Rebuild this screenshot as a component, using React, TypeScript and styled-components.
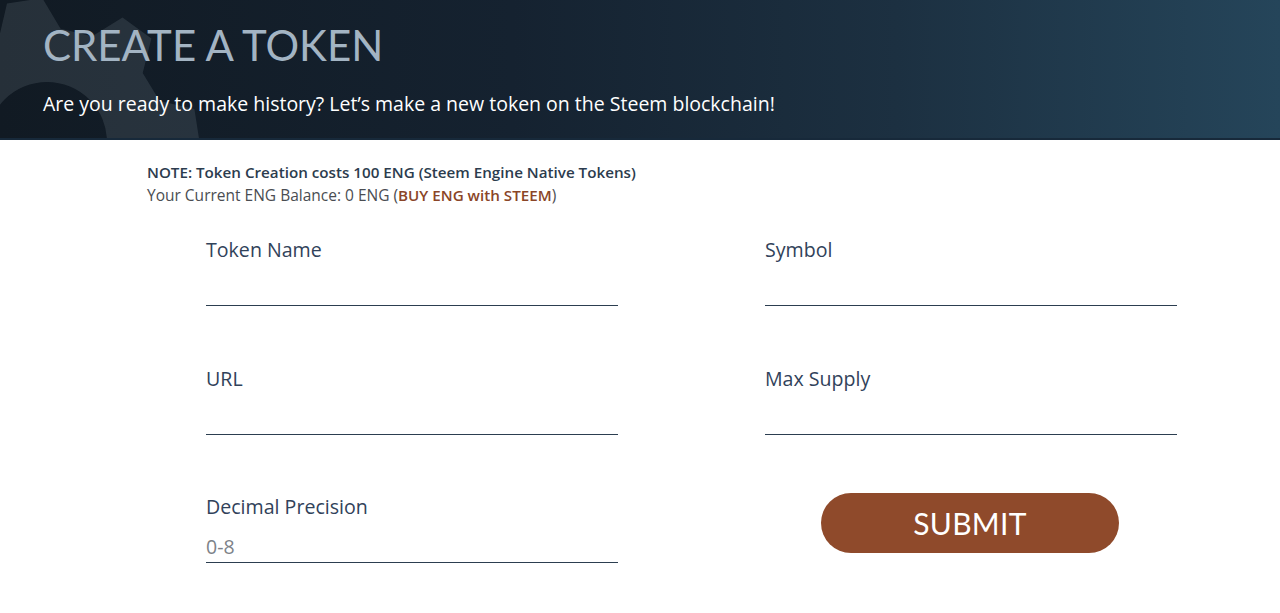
import styled, { createGlobalStyle } from "styled-components";

const GlobalStyle = createGlobalStyle`
  * {
    box-sizing: border-box;
  }
  body {
    margin: 0;
    background: #ffffff;
    font-family: "Open Sans", "Liberation Sans", sans-serif;
  }
`;

const Page = styled.div`
  width: 1280px;
  min-height: 613px;
  background: #ffffff;
`;

const Header = styled.header`
  position: relative;
  height: 140px;
  padding: 20px 43px 0;
  overflow: hidden;
  border-bottom: 2px solid #17293a;
  background: linear-gradient(
    90deg,
    #111a23 0%,
    #152230 40%,
    #1c3041 70%,
    #25455a 100%
  );
`;

const Gear = styled.svg`
  position: absolute;
  left: 0;
  top: 0;
  width: 260px;
  height: 140px;
`;

const Title = styled.h1`
  position: relative;
  margin: 0;
  font-family: Lato, "Open Sans", sans-serif;
  font-weight: 400;
  font-size: 42px;
  line-height: 50px;
  color: #a3b4c3;
`;

const Subtitle = styled.p`
  position: relative;
  margin: 21px 0 0;
  font-size: 19.5px;
  line-height: 26px;
  color: #ffffff;
`;

const Content = styled.main`
  padding: 21px 0 0 147px;
`;

const Note = styled.div`
  font-size: 15.5px;
  line-height: 23px;
  color: #4a4d52;
`;

const NoteStrong = styled.div`
  font-size: 15.2px;
  font-weight: 600;
  color: #2c3c4e;
`;

const BuyLink = styled.a`
  font-size: 15.2px;
  font-weight: 600;
  color: #8a4527;
  text-decoration: none;
`;

const Form = styled.form`
  display: grid;
  grid-template-columns: 412px 412px;
  column-gap: 147px;
  row-gap: 59.5px;
  margin: 30px 0 0 59px;
`;

const Field = styled.label`
  display: flex;
  flex-direction: column;
`;

const Label = styled.span`
  font-size: 19.6px;
  line-height: 26px;
  color: #31425a;
`;

const Input = styled.input`
  height: 43px;
  padding: 10px 0 0;
  border: none;
  border-bottom: 1px solid #2c3e50;
  outline: none;
  background: transparent;
  font-family: "Open Sans", "Liberation Sans", sans-serif;
  font-size: 19.5px;
  color: #333;
  &::placeholder {
    color: #7d8288;
  }
`;

const SubmitCell = styled.div`
  display: flex;
  align-items: flex-start;
  padding-left: 56px;
`;

const SubmitButton = styled.button`
  width: 298px;
  height: 60px;
  margin-top: -1px;
  border: none;
  border-radius: 30px;
  background: #8f4a2b;
  color: #ffffff;
  font-family: Lato, "Open Sans", sans-serif;
  font-size: 30px;
  letter-spacing: 0.3px;
  cursor: pointer;
`;

function gearPath(cx: number, cy: number, teeth: number, rIn: number, rOut: number) {
  const pts: string[] = [];
  const step = (Math.PI * 2) / teeth;
  for (let i = 0; i < teeth; i++) {
    const a = i * step - 1.2;
    const seq = [
      [a, rIn],
      [a + step * 0.18, rOut],
      [a + step * 0.48, rOut],
      [a + step * 0.66, rIn],
    ];
    seq.forEach(([ang, r]) => {
      pts.push(`${(cx + Math.cos(ang) * r).toFixed(1)},${(cy + Math.sin(ang) * r).toFixed(1)}`);
    });
  }
  return `M${pts.join("L")}Z`;
}

const fields = [
  { label: "Token Name", placeholder: "" },
  { label: "Symbol", placeholder: "" },
  { label: "URL", placeholder: "" },
  { label: "Max Supply", placeholder: "" },
  { label: "Decimal Precision", placeholder: "0-8" },
];

function App() {
  return (
    <Page>
      <GlobalStyle />
      <Header>
        <Gear viewBox="0 0 260 140">
          <path
            fill="rgba(200,210,220,0.12)"
            fillRule="evenodd"
            d={`${gearPath(48, 150, 8, 122, 152)} M107,142 A60,60 0 1,0 -13,142 A60,60 0 1,0 107,142 Z`}
          />
        </Gear>
        <Title>CREATE A TOKEN</Title>
        <Subtitle>
          Are you ready to make history? Let’s make a new token on the Steem
          blockchain!
        </Subtitle>
      </Header>
      <Content>
        <Note>
          <NoteStrong>
            NOTE: Token Creation costs 100 ENG (Steem Engine Native Tokens)
          </NoteStrong>
          Your Current ENG Balance: 0 ENG (<BuyLink href="#">BUY ENG with STEEM</BuyLink>)
        </Note>
        <Form onSubmit={(e) => e.preventDefault()}>
          {fields.map((f) => (
            <Field key={f.label}>
              <Label>{f.label}</Label>
              <Input placeholder={f.placeholder} />
            </Field>
          ))}
          <SubmitCell>
            <SubmitButton type="submit">SUBMIT</SubmitButton>
          </SubmitCell>
        </Form>
      </Content>
    </Page>
  );
}

export default App;
